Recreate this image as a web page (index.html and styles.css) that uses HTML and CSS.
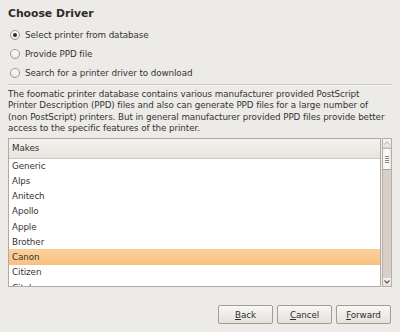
FILE: index.html
```html
<!DOCTYPE html>
<html lang="en">
  <head>
    <meta charset="UTF-8" />
    <title>Choose Driver</title>
    <link rel="stylesheet" href="styles.css">
  </head>
  <body>
    <div class="dialog">
      <h1 class="title">Choose Driver</h1>
      <div class="choices">
        <label class="choice"><span class="radio checked"></span>Select printer from database</label>
        <label class="choice"><span class="radio"></span>Provide PPD file</label>
        <label class="choice"><span class="radio"></span>Search for a printer driver to download</label>
      </div>
      <div class="separator"></div>
      <p class="info">The foomatic printer database contains various manufacturer provided PostScript Printer Description (PPD) files and also can generate PPD files for a large number of (non PostScript) printers. But in general manufacturer provided PPD files provide better access to the specific features of the printer.</p>
      <div class="makes">
        <div class="list">
          <div class="list-head">Makes</div>
          <div class="rows">
            <div class="row">Generic</div>
            <div class="row">Alps</div>
            <div class="row">Anitech</div>
            <div class="row">Apollo</div>
            <div class="row">Apple</div>
            <div class="row">Brother</div>
            <div class="row selected">Canon</div>
            <div class="row">Citizen</div>
            <div class="row">Citoh</div>
          </div>
        </div>
        <div class="scrollbar">
          <div class="sb-btn">
            <svg width="6" height="4" viewBox="0 0 6 4"><path d="M0.5 3.5 L3 1 L5.5 3.5" fill="none" stroke="#b3aca5" stroke-width="1"/></svg>
          </div>
          <div class="sb-thumb">
            <span></span><span></span><span></span><span></span>
          </div>
          <div class="sb-track"></div>
          <div class="sb-btn">
            <svg width="6" height="4" viewBox="0 0 6 4"><path d="M0.5 0.5 L3 3 L5.5 0.5" fill="none" stroke="#5a554f" stroke-width="1.2"/></svg>
          </div>
        </div>
      </div>
      <div class="buttons">
        <button class="btn"><u>B</u>ack</button>
        <button class="btn"><u>C</u>ancel</button>
        <button class="btn"><u>F</u>orward</button>
      </div>
    </div>
  </body>
</html>
```

FILE: styles.css
```css
body {
  margin: 0;
  background-color: #edebe8;
  font-family: "DejaVu Sans", sans-serif;
  font-size: 8.75px;
  letter-spacing: -0.08px;
  color: #353331;
}

.dialog {
  height: 332px;
  padding: 0 8px;
  box-sizing: border-box;
  display: flex;
  flex-direction: column;
}

.title {
  margin: 7px 0 0;
  font-size: 10.8px;
  line-height: 14px;
  font-weight: bold;
  letter-spacing: 0;
  color: #2e2c2a;
}

.choices {
  margin-top: 4.5px;
  display: flex;
  flex-direction: column;
}
.choice {
  display: flex;
  align-items: center;
  height: 19px;
  gap: 5px;
}
.radio {
  width: 8px;
  height: 8px;
  margin-left: 2px;
  border: 1px solid #9c968f;
  border-radius: 50%;
  background: linear-gradient(#ffffff, #ebe8e4);
  display: grid;
  place-items: center;
}
.radio.checked::after {
  content: "";
  width: 4px;
  height: 4px;
  border-radius: 50%;
  background-color: #2f2d2b;
}

.separator {
  margin-top: 1.5px;
  height: 1px;
  background-color: #cdc7c0;
  border-bottom: 1px solid #fbfaf9;
}

.info {
  margin: 3px 0 0;
  width: 380px;
  line-height: 11.3px;
}

.makes {
  margin-top: 4px;
  height: 149px;
  display: flex;
  gap: 1px;
  width: 384px;
}
.list {
  flex: 1;
  border: 1px solid #b1aaa3;
  background-color: #ffffff;
  overflow: hidden;
}
.list-head {
  height: 18.5px;
  line-height: 18.5px;
  padding-left: 3px;
  background: linear-gradient(#f4f2ef, #e8e4df);
  border-bottom: 1px solid #cfc7bf;
  color: #34322f;
}
.row {
  height: 15.25px;
  line-height: 15.25px;
  padding-left: 3px;
}
.row.selected {
  background: linear-gradient(#fcd19a, #f9c180);
  border-top: 1px solid #fbcb90;
  margin-top: -1px;
}

.scrollbar {
  width: 10px;
  display: flex;
  flex-direction: column;
  border: 1px solid #b6afa8;
  box-sizing: border-box;
  background-color: #d8d0c8;
}
.sb-btn {
  height: 8px;
  display: grid;
  place-items: center;
  background: linear-gradient(#f6f4f2, #e6e2de);
}
.sb-thumb {
  height: 20px;
  margin-top: 1px;
  background: linear-gradient(90deg, #f3f1ee, #ffffff, #eae6e2);
  border-top: 1px solid #c6bfb8;
  border-bottom: 1px solid #a8a099;
  display: flex;
  flex-direction: column;
  align-items: center;
  justify-content: center;
  gap: 1px;
}
.sb-thumb span {
  width: 4px;
  height: 1px;
  background-color: #8d867f;
}
.sb-track {
  flex: 1;
}

.buttons {
  margin-top: auto;
  margin-bottom: 8px;
  display: flex;
  justify-content: flex-end;
  gap: 4px;
  padding-right: 1px;
}
.btn {
  width: 55px;
  height: 19px;
  padding: 0;
  font-family: "DejaVu Sans", sans-serif;
  font-size: 8.75px;
  letter-spacing: -0.08px;
  color: #2e2c2a;
  border: 1px solid #a49d96;
  border-radius: 2px;
  background: linear-gradient(#f8f7f5, #e5e1dc);
}
```
